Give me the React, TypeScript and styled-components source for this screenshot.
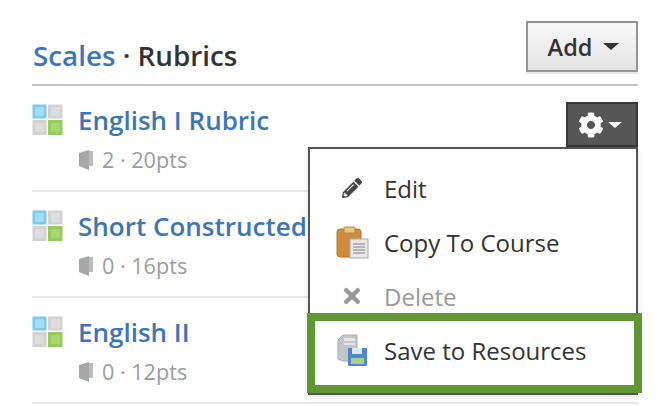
import React from 'react';
import styled, {createGlobalStyle} from 'styled-components';
import {FaCog, FaPencilAlt, FaTimes} from 'react-icons/fa';

const GlobalStyle = createGlobalStyle`
  html, body {
    margin: 0;
    background: #fff;
    font-family: "Open Sans", "Liberation Sans", sans-serif;
    overflow: hidden;
  }
`

const Page = styled.div`
  position: relative;
  width: 606px;
  height: 406px;
  margin-left: 32px;
`

const Header = styled.header`
  display: flex;
  align-items: flex-end;
  justify-content: space-between;
  height: 84px;
  border-bottom: 2px solid #c6c6c6;
  box-sizing: content-box;
`

const Title = styled.h1`
  margin: 0 0 10px 1px;
  font-size: 27.8px;
  line-height: 38px;
  font-weight: 600;
  color: #333;
`

const ScaleLink = styled.a`
  color: #3f76b2;
`

const AddButton = styled.button`
  display: flex;
  align-items: center;
  justify-content: center;
  gap: 11px;
  width: 112px;
  height: 51px;
  margin-bottom: 12px;
  padding: 0 0 0 3px;
  border: 2px solid #949494;
  border-radius: 1px;
  background: linear-gradient(#f8f8f8, #e4e4e4);
  box-shadow: 0 2px 0 #e8e8e8;
  font-family: inherit;
  font-size: 23.5px;
  font-weight: 600;
  color: #333;
`

const Caret = styled.span<{$colour: string; $size: number}>`
  width: 0;
  height: 0;
  border-left: ${props => props.$size}px solid transparent;
  border-right: ${props => props.$size}px solid transparent;
  border-top: ${props => props.$size - 1}px solid ${props => props.$colour};
`

const Row = styled.div`
  display: flex;
  height: 104px;
  border-bottom: 2px solid #e8e8e8;
  box-sizing: content-box;
`

const RowBody = styled.div`
  display: flex;
  flex-direction: column;
  margin-left: 15px;
  padding-top: 17px;
`

const RowTitle = styled.a`
  font-size: 26px;
  line-height: 34px;
  font-weight: 600;
  color: #3f76b2;
  white-space: nowrap;
`

const Meta = styled.div`
  display: flex;
  align-items: center;
  gap: 9px;
  margin-top: 9px;
  margin-left: 1px;
  font-size: 21.6px;
  line-height: 28px;
  color: #9a9ca3;
`

const GridMark = styled.svg`
  flex: none;
  margin-top: 18px;
`

const GearButton = styled.button`
  position: absolute;
  top: 102px;
  right: 0;
  display: flex;
  align-items: center;
  justify-content: center;
  gap: 4px;
  width: 72px;
  height: 45px;
  padding: 0 4px 0 0;
  border: 2px solid #383838;
  background: #565656;
  color: #fff;
  font-size: 26px;
`

const Menu = styled.ul`
  position: absolute;
  top: 147px;
  right: 0;
  width: 330px;
  height: 248px;
  margin: 0;
  padding: 12px 0 0;
  list-style: none;
  box-sizing: border-box;
  border: 2px solid #555;
  background: #fff;
  box-shadow: 0 2px 6px rgba(0, 0, 0, 0.12);
`

const MenuItem = styled.li<{$disabled?: boolean}>`
  position: relative;
  display: flex;
  align-items: center;
  height: 54px;
  font-size: 24px;
  color: ${props => (props.$disabled ? '#9a9a9a' : '#333')};
`

const IconSlot = styled.span<{$colour?: string}>`
  position: relative;
  display: flex;
  align-items: center;
  justify-content: center;
  flex: none;
  box-sizing: border-box;
  width: 74px;
  padding-left: 10px;
  color: ${props => props.$colour ?? '#444'};
`

const Label = styled.span`
  position: relative;
`

const HighlightFrame = styled.span`
  position: absolute;
  top: -10px;
  bottom: -16px;
  left: -3px;
  right: -6px;
  border: 8px solid #5f9732;
  background: #fff;
`

function Mark() {
  return (
    <GridMark width="31" height="32" viewBox="0 0 31 32">
      <rect x="0.5" y="0.5" width="14" height="14" fill="#7cc9ec" />
      <rect x="3" y="3" width="9" height="9" fill="#a5dcf5" />
      <rect x="16" y="0.5" width="14.5" height="14" fill="#d2d2d2" />
      <rect x="19" y="3" width="9" height="9" fill="#dddddd" />
      <rect x="0.5" y="16" width="14" height="15" fill="#d2d2d2" />
      <rect x="3" y="19" width="9" height="9" fill="#dddddd" />
      <rect x="16" y="16" width="14.5" height="15" fill="#93cc5c" />
      <rect x="19" y="19" width="9" height="9" fill="#a9d66e" />
    </GridMark>
  )
}

function BookIcon() {
  return (
    <svg width="14" height="20" viewBox="0 0 14 20">
      <path d="M4 1h10v15h-4V1z" fill="#bcbcbc" />
      <path d="M0 3 10 0v20L0 16z" fill="#a6a8a8" />
    </svg>
  )
}

function ClipboardIcon() {
  return (
    <svg width="33" height="33" viewBox="0 0 33 33">
      <rect x="1" y="3" width="24" height="28" rx="3" fill="#cf8c3f" stroke="#b5762f" />
      <rect x="8" y="1" width="11" height="6" rx="1" fill="#e9c873" stroke="#a98c4a" />
      <rect x="14" y="13" width="18" height="19" fill="#e8e8e8" stroke="#a9a9a9" />
      <path d="M17 18h12M17 21h12M17 24h12M17 27h12" stroke="#a5a5a5" strokeWidth="1.500" />
    </svg>
  )
}

function SaveIcon() {
  return (
    <svg width="31" height="33" viewBox="0 0 31 33">
      <path d="M1 6 6 1h14v26H6l-5-2z" fill="#c2c6ca" stroke="#a8acb0" />
      <path d="M7 4h11v3H7zM7 9h11v2H7z" fill="#e2e4e6" />
      <rect x="11" y="14" width="19" height="18" rx="1" fill="#4e86cf" />
      <rect x="15" y="14" width="10" height="6" fill="#dce8f5" />
      <rect x="14" y="24" width="13" height="6" fill="#a9d08e" />
    </svg>
  )
}

const rubrics = [
  {name: 'English I Rubric', count: 2, points: 20},
  {name: 'Short Constructed', count: 0, points: 16},
  {name: 'English II', count: 0, points: 12},
]

function App() {
  return (
    <Page>
      <GlobalStyle />
      <Header>
        <Title>
          <ScaleLink>Scales</ScaleLink> · Rubrics
        </Title>
        <AddButton>
          Add <Caret $colour="#333" $size={8} />
        </AddButton>
      </Header>
      {rubrics.map(rubric => (
        <Row key={rubric.name}>
          <Mark />
          <RowBody>
            <RowTitle>{rubric.name}</RowTitle>
            <Meta>
              <BookIcon />
              {rubric.count} · {rubric.points}pts
            </Meta>
          </RowBody>
        </Row>
      ))}
      <GearButton>
        <FaCog />
        <Caret $colour="#fff" $size={7} />
      </GearButton>
      <Menu>
        <MenuItem>
          <IconSlot><FaPencilAlt size={20} /></IconSlot>
          <Label>Edit</Label>
        </MenuItem>
        <MenuItem>
          <IconSlot><ClipboardIcon /></IconSlot>
          <Label>Copy To Course</Label>
        </MenuItem>
        <MenuItem $disabled>
          <IconSlot $colour="#9a9a9a"><FaTimes size={24} /></IconSlot>
          <Label>Delete</Label>
        </MenuItem>
        <MenuItem>
          <HighlightFrame />
          <IconSlot><SaveIcon /></IconSlot>
          <Label>Save to Resources</Label>
        </MenuItem>
      </Menu>
    </Page>
  )
}

export default App
